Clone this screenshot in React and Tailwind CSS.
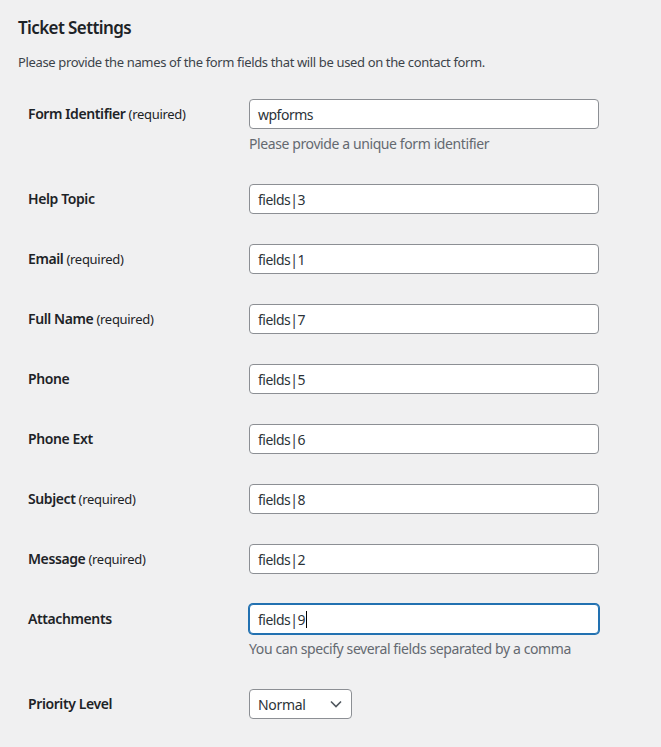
import React from "react";

const rows = [
  { label: "Help Topic", value: "fields|3" },
  { label: "Email", req: true, value: "fields|1" },
  { label: "Full Name", req: true, value: "fields|7" },
  { label: "Phone", value: "fields|5" },
  { label: "Phone Ext", value: "fields|6" },
  { label: "Subject", req: true, value: "fields|8" },
  { label: "Message", req: true, value: "fields|2" },
];

function Label({ label, req }) {
  return (
    <div className="w-[210px] shrink-0 pt-[21px] pr-2.5 text-[14px] leading-[1.3] font-semibold text-[#1d2327] tracking-[-0.4px]">
      {label}
      {req && <span className="font-normal text-[13px] tracking-[-0.3px]"> (required)</span>}
    </div>
  );
}

function Input({ value, focused, caret }) {
  return (
    <div
      className={
        "w-[350px] h-[30px] rounded-[4px] bg-white flex items-center px-2 text-[14px] text-[#2c3338] tracking-[-0.5px] border " +
        (focused
          ? "border-[#2271b1] shadow-[0_0_0_1px_#2271b1]"
          : "border-[#8c8f94]")
      }
    >
      <span>{value}</span>
      {caret && <span className="inline-block w-px h-[17px] bg-black ml-px" />}
    </div>
  );
}

export default function App() {
  return (
    <div
      className="min-h-[747px] w-full bg-[#f0f0f1] pl-[18px] pt-[16px] text-[#1d2327]"
      style={{ fontFamily: '"Noto Sans", "Open Sans", sans-serif' }}
    >
      <h2 className="text-[17px] leading-[24px] font-semibold text-[#1d2327] tracking-[-0.6px]">Ticket Settings</h2>
      <p className="mt-[12px] text-[13px] leading-[20px] text-[#3c434a] tracking-[-0.36px]">
        Please provide the names of the form fields that will be used on the contact form.
      </p>
      <div className="mt-[12px] pl-[10px] flex flex-col">
        <div className="flex">
          <Label label="Form Identifier" req />
          <div className="py-[15px] pl-[11px]">
            <Input value="wpforms" />
            <p className="mt-1 text-[14px] leading-[21px] text-[#646970] tracking-[-0.4px]">Please provide a unique form identifier</p>
          </div>
        </div>
        {rows.map((r) => (
          <div className="flex" key={r.label}>
            <Label label={r.label} req={r.req} />
            <div className="py-[15px] pl-[11px]">
              <Input value={r.value} />
            </div>
          </div>
        ))}
        <div className="flex">
          <Label label="Attachments" />
          <div className="py-[15px] pl-[11px]">
            <Input value="fields|9" focused caret />
            <p className="mt-1 text-[14px] leading-[21px] text-[#646970] tracking-[-0.4px]">You can specify several fields separated by a comma</p>
          </div>
        </div>
        <div className="flex">
          <Label label="Priority Level" />
          <div className="py-[15px] pl-[11px]">
            <div className="w-[103px] h-[30px] rounded-[4px] bg-white border border-[#8c8f94] flex items-center justify-between pl-2 pr-[8px] text-[14px] text-[#2c3338] tracking-[-0.3px]">
              <span>Normal</span>
              <svg width="14" height="14" viewBox="0 0 14 14" fill="none">
                <path d="M2 4.5 L7 9.5 L12 4.5" stroke="#50575e" strokeWidth="1.6" />
              </svg>
            </div>
          </div>
        </div>
      </div>
    </div>
  );
}
